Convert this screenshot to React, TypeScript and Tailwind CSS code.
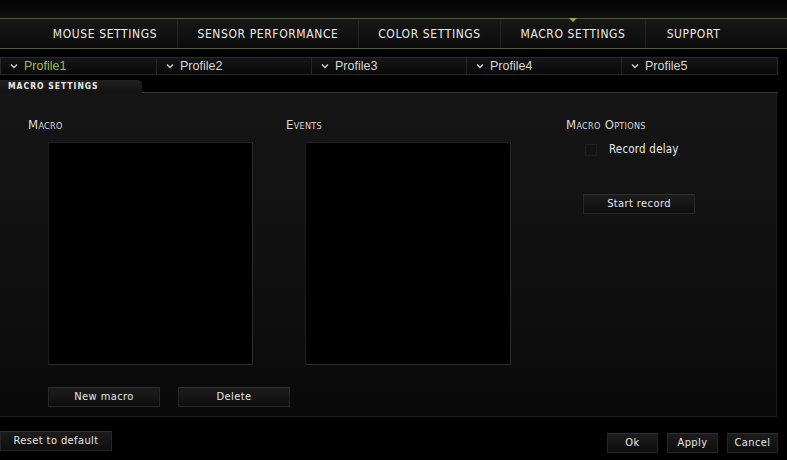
import type { ReactNode } from 'react'

const font = '[font-family:"DejaVu_Sans_Condensed","DejaVu_Sans",sans-serif]'

const tabs = [
  { label: 'MOUSE SETTINGS', w: 'w-[144px]' },
  { label: 'SENSOR PERFORMANCE', w: 'w-[181px]' },
  { label: 'COLOR SETTINGS', w: 'w-[142px]' },
  { label: 'MACRO SETTINGS', w: 'w-[145px]', active: true },
  { label: 'SUPPORT', w: 'w-[96px]' },
]

const profiles = ['Profile1', 'Profile2', 'Profile3', 'Profile4', 'Profile5']

const Chevron = () => (
  <svg width="8" height="6" viewBox="0 0 8 6" className="shrink-0">
    <path d="M1 1.5 L4 4.5 L7 1.5" fill="none" stroke="#cfcfcf" strokeWidth="1.4" />
  </svg>
)

const Btn = ({ children, className = '' }: { children: ReactNode; className?: string }) => (
  <button
    type="button"
    className={`flex h-[20px] items-center justify-center border border-[#262626] border-t-[#303030] bg-gradient-to-b from-[#1c1c1c] to-[#0e0e0e] text-[11px] tracking-[0.4px] text-[#e6e6e6] ${className}`}
  >
    {children}
  </button>
)

const Label = ({ children }: { children: ReactNode }) => (
  <p className="h-[14px] text-[13px] leading-[14px] tracking-[0.3px] text-[#dcdcdc] [font-variant:small-caps]">
    {children}
  </p>
)

export default function App() {
  return (
    <div className={`flex h-[460px] w-[787px] flex-col overflow-hidden bg-black ${font}`}>
      <div className="h-[18px] bg-gradient-to-b from-[#030303] to-[#111111]" />

      <nav className="flex h-[31px] border-y border-[#4e5a39] bg-gradient-to-b from-[#181818] to-[#0b0b0b] pl-[33px] pt-px">
        {tabs.map((t, i) => (
          <div
            key={t.label}
            className={`relative flex ${t.w} items-center justify-center text-[12px] tracking-[0.6px] text-[#ececec] ${
              i > 0 ? 'border-l border-[#242424]' : ''
            }`}
          >
            {t.active && (
              <span className="absolute -top-[2px] left-1/2 -translate-x-1/2 border-x-[4px] border-t-[4px] border-x-transparent border-t-[#8fae4a]" />
            )}
            {t.label}
          </div>
        ))}
      </nav>

      <div className="mt-[8px] flex h-[18px] w-[778px] border border-[#2a2a2a] bg-gradient-to-b from-[#161616] to-[#090909]">
        {profiles.map((p, i) => (
          <div
            key={p}
            className={`flex w-[155px] items-center gap-[6px] pl-[9px] text-[12.5px] [font-family:"Liberation_Sans",Arial,sans-serif] ${
              i > 0 ? 'border-l border-[#262626]' : ''
            } ${i === 0 ? 'text-[#9fb85c]' : 'text-[#d6d6d6]'}`}
          >
            <Chevron />
            {p}
          </div>
        ))}
      </div>

      <div className="mt-[5px] flex h-[13px] w-[778px] items-end">
        <div className="flex h-[13px] w-[142px] items-center rounded-tr-[5px] bg-gradient-to-b from-[#222222] to-[#121212] pl-[8px] text-[8.5px] font-semibold tracking-[1px] text-[#e8e8e8]">
          MACRO SETTINGS
        </div>
        <div className="h-px flex-1 bg-[#333333]" />
      </div>

      <section className="flex h-[324px] w-[777px] flex-col border-r border-b border-[#1f1f1f] bg-gradient-to-b from-[#151515] via-[#111111] to-[#090909]">
        <div className="flex pl-[28px] pt-[25px]">
          <div className="w-[258px]">
            <Label>Macro</Label>
            <div className="ml-[20px] mt-[10px] h-[223px] w-[205px] border border-[#1e1e1e] border-r-[#2c2c2c] border-b-[#2c2c2c] bg-black" />
          </div>
          <div className="w-[280px]">
            <Label>Events</Label>
            <div className="ml-[19px] mt-[10px] h-[223px] w-[206px] border border-[#1e1e1e] border-r-[#2c2c2c] border-b-[#2c2c2c] bg-black" />
          </div>
          <div>
            <Label>Macro Options</Label>
            <div className="ml-[19px] mt-[9px] flex items-center gap-[12px]">
              <span className="h-[12px] w-[12px] border border-[#1d1d1d] bg-[#131313]" />
              <span className="text-[11.5px] tracking-[0.2px] text-[#ececec]">Record delay</span>
            </div>
            <Btn className="ml-[17px] mt-[36px] w-[112px]">Start record</Btn>
          </div>
        </div>
        <div className="mt-[22px] flex gap-[18px] pl-[48px]">
          <Btn className="w-[112px]">New macro</Btn>
          <Btn className="w-[112px]">Delete</Btn>
        </div>
      </section>

      <footer className="flex w-[778px] items-start pt-[14px]">
        <Btn className="w-[112px]">Reset to default</Btn>
        <div className="ml-auto mt-[2px] flex gap-[9px]">
          <Btn className="w-[51px]">Ok</Btn>
          <Btn className="w-[51px]">Apply</Btn>
          <Btn className="w-[51px]">Cancel</Btn>
        </div>
      </footer>
    </div>
  )
}
